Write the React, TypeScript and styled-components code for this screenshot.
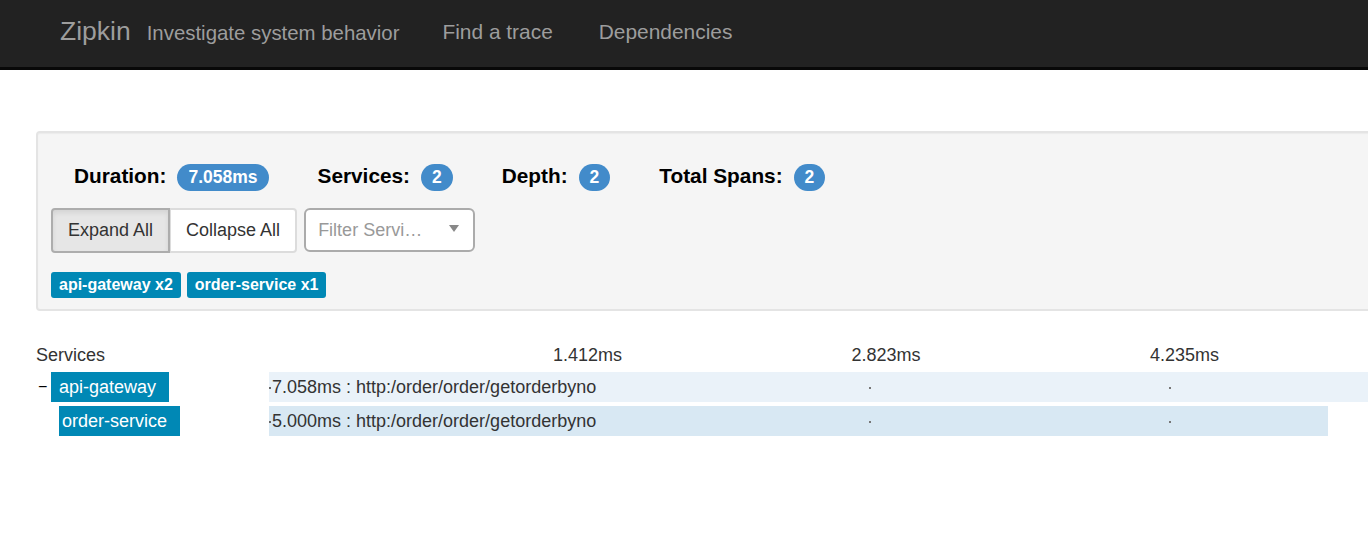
import React from 'react'
import styled, { createGlobalStyle } from 'styled-components'

const TIMELINE_WIDTH = 1500
const TOTAL_MS = 7.058

const GlobalStyle = createGlobalStyle`
  html, body {
    margin: 0;
    padding: 0;
    background: #fff;
    overflow: hidden;
  }
  body {
    font-family: 'Liberation Sans', Arial, sans-serif;
    color: #333;
  }
`

const Navbar = styled.nav`
  height: 67px;
  background: #222;
  border-bottom: 3px solid #080808;
  display: flex;
  align-items: center;
  padding-left: 60px;
  color: #9d9d9d;

  .brand {
    font-size: 26.5px;
    margin-right: 16px;
    margin-top: -4px;
  }

  .tagline {
    font-size: 20.4px;
    margin-right: 43px;
  }

  .link {
    font-size: 20.9px;
    margin-right: 46px;
    margin-top: -4px;
  }
`

const Page = styled.div`
  width: 1800px;
  padding: 61px 0 0 36px;
`

const Panel = styled.div`
  background: #f5f5f5;
  border: 2px solid #e4e4e4;
  border-radius: 4px;
  padding: 31px 13px 11px;
  box-shadow: inset 0 1px 1px rgba(0, 0, 0, 0.04);
`

const Stats = styled.div`
  display: flex;
  align-items: center;
  height: 27px;
  padding-left: 23px;
  margin-bottom: 17px;
`

const Stat = styled.div`
  display: flex;
  align-items: center;
  margin-right: 49px;

  .label {
    font-size: 20.8px;
    font-weight: bold;
    color: #000;
    margin-right: 11px;
    margin-bottom: 4px;
  }
`

const Badge = styled.span`
  display: inline-flex;
  align-items: center;
  justify-content: center;
  height: 27px;
  min-width: 31px;
  box-sizing: border-box;
  padding: 0 11px;
  border-radius: 14px;
  background: #428bca;
  color: #fff;
  font-size: 17.5px;
  font-weight: bold;
`

const Controls = styled.div`
  display: flex;
  align-items: center;
  margin-bottom: 19px;
`

const ButtonGroup = styled.div`
  display: flex;
  margin-right: 7px;
`

const Button = styled.button<{ $active?: boolean }>`
  height: 45px;
  box-sizing: border-box;
  font-family: 'Liberation Sans', Arial, sans-serif;
  font-size: 18px;
  color: #333;
  padding: 0 15px;
  background: ${({ $active }) => ($active ? '#e6e6e6' : '#fff')};
  border: 2px solid ${({ $active }) => ($active ? '#adadad' : '#dcdcdc')};
  box-shadow: ${({ $active }) =>
    $active ? 'inset 0 3px 5px rgba(0, 0, 0, 0.08)' : 'none'};
  border-radius: 0;

  &:first-child {
    border-radius: 4px 0 0 4px;
  }

  &:last-child {
    border-radius: 0 4px 4px 0;
    border-left-width: 1px;
  }
`

const Select = styled.div`
  width: 171px;
  height: 44px;
  box-sizing: border-box;
  background: #fff;
  border: 2px solid #ababab;
  border-radius: 6px;
  display: flex;
  align-items: center;
  justify-content: space-between;
  padding: 0 14px 0 12px;
  margin-top: -1px;

  .placeholder {
    font-size: 18px;
    color: #999;
  }

  .arrow {
    width: 0;
    height: 0;
    border-left: 5px solid transparent;
    border-right: 5px solid transparent;
    border-top: 7px solid #888;
    margin-top: -4px;
  }
`

const Tags = styled.div`
  display: flex;
  gap: 6px;
`

const Tag = styled.span`
  height: 26px;
  display: inline-flex;
  align-items: center;
  padding: 0 8px;
  border-radius: 3px;
  background: #0088b5;
  color: #fff;
  font-size: 16px;
  font-weight: bold;
`

const Timeline = styled.div`
  margin-top: 33px;
`

const Line = styled.div`
  display: flex;
  align-items: center;
`

const Header = styled(Line)`
  height: 22px;
  margin-bottom: 6px;
  font-size: 18px;
  color: #333;
`

const NameCol = styled.div`
  width: 233px;
  flex: none;
  display: flex;
  align-items: center;
`

const Axis = styled.div`
  position: relative;
  width: ${TIMELINE_WIDTH}px;
  height: 100%;
`

const TickLabel = styled.span`
  position: absolute;
  top: 1px;
  font-size: 18px;
`

const Row = styled(Line)`
  height: 30px;
  margin-bottom: 4px;
`

const Toggle = styled.span`
  width: 15px;
  padding-left: 2px;
  box-sizing: border-box;
  font-size: 16px;
  color: #000;
`

const ServiceName = styled.span<{ $indent: number; $pad: number }>`
  height: 30px;
  display: inline-flex;
  align-items: center;
  margin-left: ${({ $indent }) => $indent}px;
  padding: 0 13px 0 ${({ $pad }) => $pad}px;
  background: #0088b5;
  color: #fff;
  font-size: 18px;
`

const Track = styled.div`
  position: relative;
  width: ${TIMELINE_WIDTH}px;
  height: 30px;
`

const Bar = styled.div<{ $shade: string }>`
  height: 30px;
  background: ${({ $shade }) => $shade};
  display: flex;
  align-items: center;
  font-size: 18px;
  color: #333;
  white-space: nowrap;

  .start {
    width: 2px;
    height: 2px;
    background: #666;
    margin-right: 1px;
    margin-top: 2px;
  }
`

const TickDot = styled.span`
  position: absolute;
  top: 15px;
  width: 2px;
  height: 2px;
  background: #777;
`

const stats = [
  { label: 'Duration:', value: '7.058ms' },
  { label: 'Services:', value: '2' },
  { label: 'Depth:', value: '2' },
  { label: 'Total Spans:', value: '2' },
]

const ticks = [1, 2, 3, 4].map((i) => ({
  x: (TIMELINE_WIDTH * i) / 5,
  shift: 16 + (i - 1) * 1.5,
  label: ((TOTAL_MS * i) / 5).toFixed(3) + 'ms',
}))

const spans = [
  {
    service: 'api-gateway',
    duration: 7.058,
    share: 1,
    name: 'http:/order/order/getorderbyno',
    toggle: true,
    indent: 0,
    pad: 8,
    shade: '#eaf2f9',
  },
  {
    service: 'order-service',
    duration: 5.0,
    share: 0.706,
    name: 'http:/order/order/getorderbyno',
    toggle: false,
    indent: 8,
    pad: 3,
    shade: '#d8e8f3',
  },
]

const App: React.FC = () => (
  <>
    <GlobalStyle />
    <Navbar>
      <span className='brand'>Zipkin</span>
      <span className='tagline'>Investigate system behavior</span>
      <span className='link'>Find a trace</span>
      <span className='link'>Dependencies</span>
    </Navbar>
    <Page>
      <Panel>
        <Stats>
          {stats.map((s) => (
            <Stat key={s.label}>
              <span className='label'>{s.label}</span>
              <Badge>{s.value}</Badge>
            </Stat>
          ))}
        </Stats>
        <Controls>
          <ButtonGroup>
            <Button $active>Expand All</Button>
            <Button>Collapse All</Button>
          </ButtonGroup>
          <Select>
            <span className='placeholder'>Filter Servi…</span>
            <span className='arrow' />
          </Select>
        </Controls>
        <Tags>
          <Tag>api-gateway x2</Tag>
          <Tag>order-service x1</Tag>
        </Tags>
      </Panel>
      <Timeline>
        <Header>
          <NameCol>Services</NameCol>
          <Axis>
            {ticks.slice(0, 3).map((t) => (
              <TickLabel key={t.label} style={{ left: t.x - t.shift }}>
                {t.label}
              </TickLabel>
            ))}
          </Axis>
        </Header>
        {spans.map((s) => (
          <Row key={s.service}>
            <NameCol>
              <Toggle>{s.toggle ? '−' : ''}</Toggle>
              <ServiceName $indent={s.indent} $pad={s.pad}>
                {s.service}
              </ServiceName>
            </NameCol>
            <Track>
              <Bar
                $shade={s.shade}
                style={{ width: s.share * TIMELINE_WIDTH }}
              >
                <span className='start' />
                {s.duration.toFixed(3)}ms : {s.name}
              </Bar>
              {ticks.slice(1).map((t) => (
                <TickDot key={t.label} style={{ left: t.x }} />
              ))}
            </Track>
          </Row>
        ))}
      </Timeline>
    </Page>
  </>
)

export default App
